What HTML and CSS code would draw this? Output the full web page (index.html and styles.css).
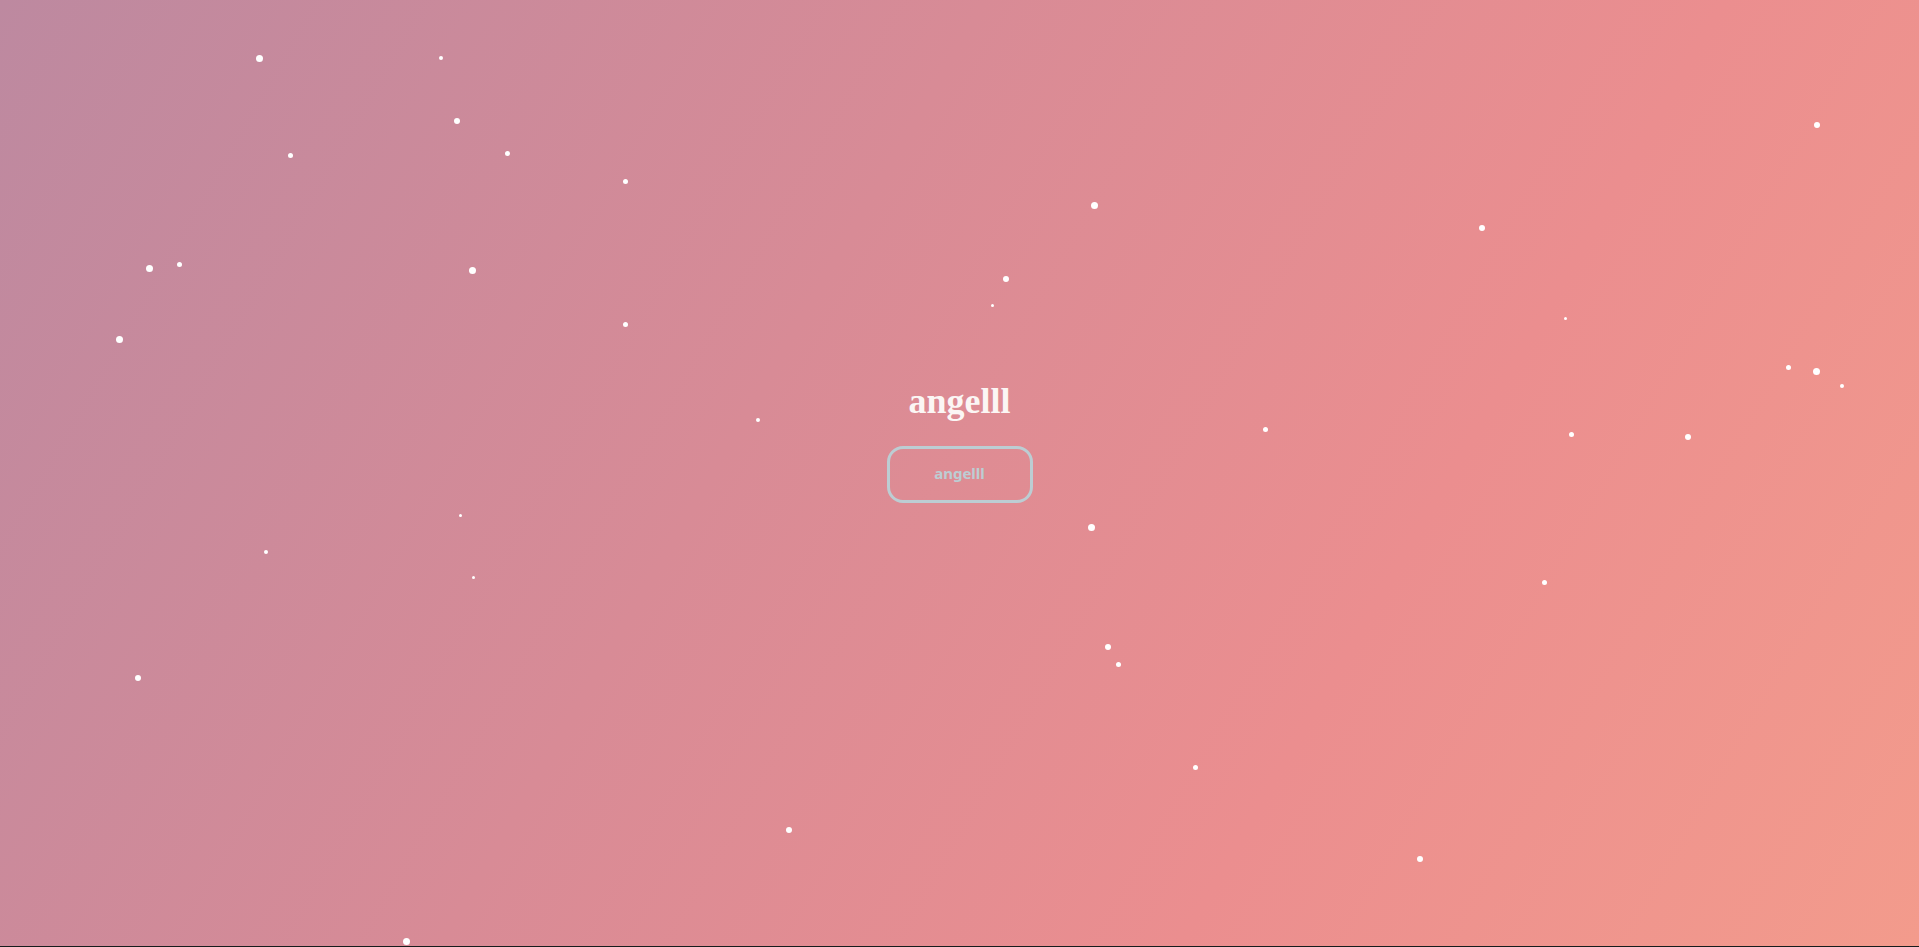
FILE: index.html
```html
<!DOCTYPE html>
<html lang="en">
<head>
<meta charset="utf-8">
<title>angelll</title>
<link rel="stylesheet" href="styles.css">
</head>
<body>
<main class="scene">
  <div class="stars">
    <span class="star" style="left:256px;top:55px;width:7px;height:7px"></span>
    <span class="star" style="left:439px;top:56px;width:4px;height:4px"></span>
    <span class="star" style="left:454px;top:118px;width:6px;height:6px"></span>
    <span class="star" style="left:288px;top:153px;width:5px;height:5px"></span>
    <span class="star" style="left:505px;top:151px;width:5px;height:5px"></span>
    <span class="star" style="left:623px;top:179px;width:5px;height:5px"></span>
    <span class="star" style="left:146px;top:265px;width:7px;height:7px"></span>
    <span class="star" style="left:177px;top:262px;width:5px;height:5px"></span>
    <span class="star" style="left:469px;top:267px;width:7px;height:7px"></span>
    <span class="star" style="left:116px;top:336px;width:7px;height:7px"></span>
    <span class="star" style="left:623px;top:322px;width:5px;height:5px"></span>
    <span class="star" style="left:1091px;top:202px;width:7px;height:7px"></span>
    <span class="star" style="left:1003px;top:276px;width:6px;height:6px"></span>
    <span class="star" style="left:991px;top:304px;width:3px;height:3px"></span>
    <span class="star" style="left:1479px;top:225px;width:6px;height:6px"></span>
    <span class="star" style="left:1814px;top:122px;width:6px;height:6px"></span>
    <span class="star" style="left:1564px;top:317px;width:3px;height:3px"></span>
    <span class="star" style="left:1786px;top:365px;width:5px;height:5px"></span>
    <span class="star" style="left:1813px;top:368px;width:7px;height:7px"></span>
    <span class="star" style="left:1840px;top:384px;width:4px;height:4px"></span>
    <span class="star" style="left:1263px;top:427px;width:5px;height:5px"></span>
    <span class="star" style="left:1569px;top:432px;width:5px;height:5px"></span>
    <span class="star" style="left:1685px;top:434px;width:6px;height:6px"></span>
    <span class="star" style="left:756px;top:418px;width:4px;height:4px"></span>
    <span class="star" style="left:459px;top:514px;width:3px;height:3px"></span>
    <span class="star" style="left:264px;top:550px;width:4px;height:4px"></span>
    <span class="star" style="left:472px;top:576px;width:3px;height:3px"></span>
    <span class="star" style="left:1088px;top:524px;width:7px;height:7px"></span>
    <span class="star" style="left:1542px;top:580px;width:5px;height:5px"></span>
    <span class="star" style="left:135px;top:675px;width:6px;height:6px"></span>
    <span class="star" style="left:1105px;top:644px;width:6px;height:6px"></span>
    <span class="star" style="left:1116px;top:662px;width:5px;height:5px"></span>
    <span class="star" style="left:1193px;top:765px;width:5px;height:5px"></span>
    <span class="star" style="left:786px;top:827px;width:6px;height:6px"></span>
    <span class="star" style="left:1417px;top:856px;width:6px;height:6px"></span>
    <span class="star" style="left:403px;top:938px;width:7px;height:7px"></span>
  </div>
  <div class="content">
    <h1 class="title">angelll</h1>
    <button class="btn" type="button">angelll</button>
  </div>
</main>
</body>
</html>
```

FILE: styles.css
```css
html, body {
  margin: 0;
  padding: 0;
}

body {
  background: #161c1c;
  height: 947px;
  overflow: hidden;
}

.scene {
  position: relative;
  height: 946px;
  overflow: hidden;
  background: linear-gradient(120deg, #bd89a0 0%, #d88b96 40%, #eb8e8f 70%, #f39b8c 100%);
}

.stars {
  position: absolute;
  inset: 0;
}

.star {
  position: absolute;
  border-radius: 50%;
  background: #ffffff;
}

.content {
  position: relative;
  display: flex;
  flex-direction: column;
  align-items: center;
  padding-top: 381px;
}

.title {
  margin: 0;
  font-family: "Liberation Serif", "Times New Roman", serif;
  font-weight: 700;
  font-size: 36px;
  line-height: 40px;
  color: #fbf6f4;
}

.btn {
  margin-top: 25px;
  box-sizing: border-box;
  width: 146px;
  height: 57px;
  display: flex;
  align-items: center;
  justify-content: center;
  background: transparent;
  border: 3px solid #bccdd3;
  border-radius: 16px;
  color: #bccdd3;
  font-family: "Noto Sans", "Open Sans", sans-serif;
  font-weight: 700;
  font-size: 15px;
  line-height: 1;
  padding: 0 0 2px;
}
```
